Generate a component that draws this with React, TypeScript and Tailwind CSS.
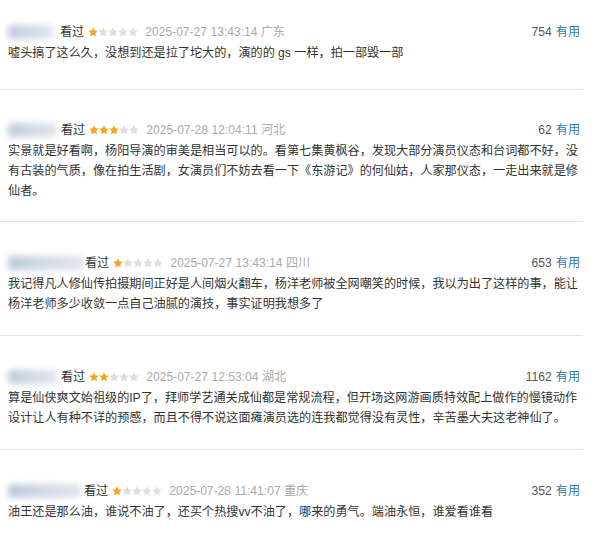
import React from "react";

type Review = {
  nameW: number;
  gap: number;
  stars: number;
  date: string;
  place: string;
  votes: string;
  text: string;
  pt: string;
  pb: string;
};

const reviews: Review[] = [
  {
    nameW: 46,
    gap: 6,
    stars: 1,
    date: "2025-07-27 13:43:14",
    place: "广东",
    votes: "754",
    text: "嘘头搞了这么久，没想到还是拉了坨大的，演的的 gs 一样，拍一部毁一部",
    pt: "pt-[22px]",
    pb: "pb-[26px]",
  },
  {
    nameW: 49,
    gap: 4,
    stars: 3,
    date: "2025-07-28 12:04:11",
    place: "河北",
    votes: "62",
    text: "实景就是好看啊，杨阳导演的审美是相当可以的。看第七集黄枫谷，发现大部分演员仪态和台词都不好，没有古装的气质，像在拍生活剧，女演员们不妨去看一下《东游记》的何仙姑，人家那仪态，一走出来就是修仙者。",
    pt: "pt-[30px]",
    pb: "pb-[20px]",
  },
  {
    nameW: 76,
    gap: 1,
    stars: 1,
    date: "2025-07-27 13:43:14",
    place: "四川",
    votes: "653",
    text: "我记得凡人修仙传拍摄期间正好是人间烟火翻车，杨洋老师被全网嘲笑的时候，我以为出了这样的事，能让杨洋老师多少收敛一点自己油腻的演技，事实证明我想多了",
    pt: "pt-[31px]",
    pb: "pb-[21px]",
  },
  {
    nameW: 49,
    gap: 4,
    stars: 2,
    date: "2025-07-27 12:53:04",
    place: "湖北",
    votes: "1162",
    text: "算是仙侠爽文始祖级的IP了，拜师学艺通关成仙都是常规流程，但开场这网游画质特效配上做作的慢镜动作设计让人有种不详的预感，而且不得不说这面瘫演员选的连我都觉得没有灵性，辛苦墨大夫这老神仙了。",
    pt: "pt-[31px]",
    pb: "pb-[21px]",
  },
  {
    nameW: 73,
    gap: 3,
    stars: 1,
    date: "2025-07-28 11:41:07",
    place: "重庆",
    votes: "352",
    text: "油王还是那么油，谁说不油了，还买个热搜vv不油了，哪来的勇气。端油永恒，谁爱看谁看",
    pt: "pt-[31px]",
    pb: "pb-[21px]",
  },
];

function Star({ on }: { on: boolean }) {
  return (
    <svg width="10" height="10" viewBox="0 0 24 24" className="shrink-0">
      <path
        d="M12 0.5l3.5 7.4 8 .9-6 5.5 1.7 8L12 18.3l-7.2 4 1.7-8-6-5.5 8-.9z"
        fill={on ? "#f5a623" : "#dedede"}
      />
    </svg>
  );
}

function Item({ r, last }: { r: Review; last: boolean }) {
  return (
    <div
      className={`${r.pt} ${r.pb} pl-[8px] pr-[3px] ${last ? "" : "border-b border-[#e4e4e4]"}`}
    >
      <div className="flex h-5 items-center text-[12.1px] leading-5">
        <div
          className="h-[14px] shrink-0 rounded-sm blur-[3px] bg-gradient-to-r from-[#bcc8da] via-[#d2dae6] to-[#e2e6ee]"
          style={{ width: r.nameW, marginRight: r.gap }}
        />
        <span className="text-[#333]">看过</span>
        <span className="ml-[4px] mr-[7px] flex items-center">
          {[0, 1, 2, 3, 4].map((i) => (
            <Star key={i} on={i < r.stars} />
          ))}
        </span>
        <span className="text-[#aaa]">
          {r.date} {r.place}
        </span>
        <span className="ml-auto text-[#555]">{r.votes}</span>
        <span className="ml-[4px] text-[#37a]">有用</span>
      </div>
      <p className="mt-[1px] text-[12.13px] leading-5 text-[#333]">{r.text}</p>
    </div>
  );
}

export default function App() {
  return (
    <div
      className="h-[538px] w-[600px] overflow-hidden bg-white"
      style={{ fontFamily: '"Liberation Sans", "Noto Sans CJK SC", sans-serif' }}
    >
      <div className="w-[583px]">
        {reviews.map((r, i) => (
          <Item key={i} r={r} last={i === reviews.length - 1} />
        ))}
      </div>
    </div>
  );
}
